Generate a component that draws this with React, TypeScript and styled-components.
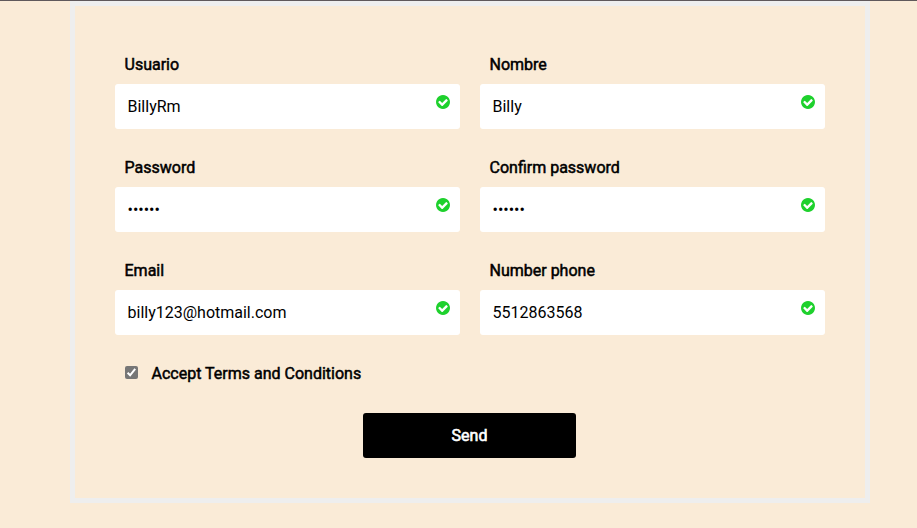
import React from "react";
import styled, { createGlobalStyle } from "styled-components";

const GlobalStyle = createGlobalStyle`
  *, *::before, *::after { box-sizing: border-box; }
  body {
    margin: 0;
    background: #faebd7;
    font-family: Roboto, "Liberation Sans", sans-serif;
    font-size: 16px;
    color: #000;
    overflow: hidden;
  }
`;

const Page = styled.div`
  height: 528px;
  border-top: 1px solid #5f585b;
`;

const Main = styled.main`
  width: 800px;
  height: 502px;
  margin-left: 70px;
  padding: 38px 40px 0;
  border: 5px solid #eee;
`;

const Form = styled.form`
  display: grid;
  grid-template-columns: 1fr 1fr;
  column-gap: 20px;
`;

const Group = styled.div`
  height: 103px;
`;

const Label = styled.label`
  display: block;
  height: 40px;
  padding-left: 9.5px;
  line-height: 42px;
  -webkit-text-stroke: 0.5px #000;
`;

const Field = styled.div`
  display: flex;
  align-items: center;
  height: 45px;
  background: #fff;
  border-radius: 3px;
`;

const Input = styled.input`
  flex: 1;
  min-width: 0;
  height: 45px;
  padding: 0 0 0 12.5px;
  border: 0;
  outline: 0;
  background: transparent;
  color: #000;
  font: 400 16px/45px Roboto, "Liberation Sans", sans-serif;
`;

const ValidIcon = styled.svg`
  flex: none;
  width: 14px;
  height: 14px;
  margin: 0 10px 9px 0;
  fill: #1ed12d;
`;

const Terms = styled.label`
  grid-column: span 2;
  display: flex;
  align-items: center;
  height: 40px;
  padding-left: 10px;
  -webkit-text-stroke: 0.5px #000;
`;

const Checkbox = styled.input`
  appearance: none;
  width: 13px;
  height: 13px;
  margin: 0;
  border-radius: 2px;
  background: #767676;
`;

const CheckboxBox = styled.span`
  display: grid;
  width: 13px;
  height: 13px;
  margin: 0 13.5px 2px 0;

  & > * { grid-area: 1 / 1; }
`;

const Tick = styled.svg`
  width: 13px;
  height: 13px;
  z-index: 1;
  pointer-events: none;
`;

const Actions = styled.div`
  grid-column: span 2;
  display: flex;
  justify-content: center;
  margin-top: 20px;
  padding-right: 1px;
`;

const Send = styled.button`
  width: 213px;
  height: 45px;
  padding: 0;
  border: 0;
  border-radius: 3px;
  background: #000;
  color: #fff;
  font: 400 16px Roboto, "Liberation Sans", sans-serif;
  -webkit-text-stroke: 0.6px #fff;
`;

const fields = [
  { id: "user", label: "Usuario", value: "BillyRm", type: "text" },
  { id: "name", label: "Nombre", value: "Billy", type: "text" },
  { id: "password", label: "Password", value: "secret", type: "password" },
  { id: "confirm", label: "Confirm password", value: "secret", type: "password" },
  { id: "email", label: "Email", value: "billy123@hotmail.com", type: "email" },
  { id: "phone", label: "Number phone", value: "5512863568", type: "tel" },
];

export default function App() {
  return (
    <>
      <GlobalStyle />
      <Page>
        <Main>
          <Form onSubmit={(e) => e.preventDefault()}>
            {fields.map((f) => (
              <Group key={f.id}>
                <Label htmlFor={f.id}>{f.label}</Label>
                <Field>
                  <Input id={f.id} type={f.type} defaultValue={f.value} spellCheck={false} />
                  <ValidIcon viewBox="128 128 1536 1536">
                    <path d="M1412 734q0-28-18-46l-91-90q-19-19-45-19t-45 19l-408 407-226-226q-19-19-45-19t-45 19l-91 90q-18 18-18 46 0 27 18 45l362 362q19 19 45 19 27 0 46-19l543-543q18-18 18-45zm252 162q0 209-103 385.5t-279.5 279.5-385.5 103-385.5-103-279.5-279.5-103-385.5 103-385.5 279.5-279.5 385.5-103 385.5 103 279.5 279.5 103 385.5z" />
                  </ValidIcon>
                </Field>
              </Group>
            ))}
            <Terms>
              <CheckboxBox>
                <Checkbox type="checkbox" defaultChecked />
                <Tick viewBox="0 0 13 13">
                  <path d="M2.6 6.8 5.1 9.3 10.2 2.8" fill="none" stroke="#fff" strokeWidth="2" />
                </Tick>
              </CheckboxBox>
              Accept Terms and Conditions
            </Terms>
            <Actions>
              <Send type="submit">Send</Send>
            </Actions>
          </Form>
        </Main>
      </Page>
    </>
  );
}
